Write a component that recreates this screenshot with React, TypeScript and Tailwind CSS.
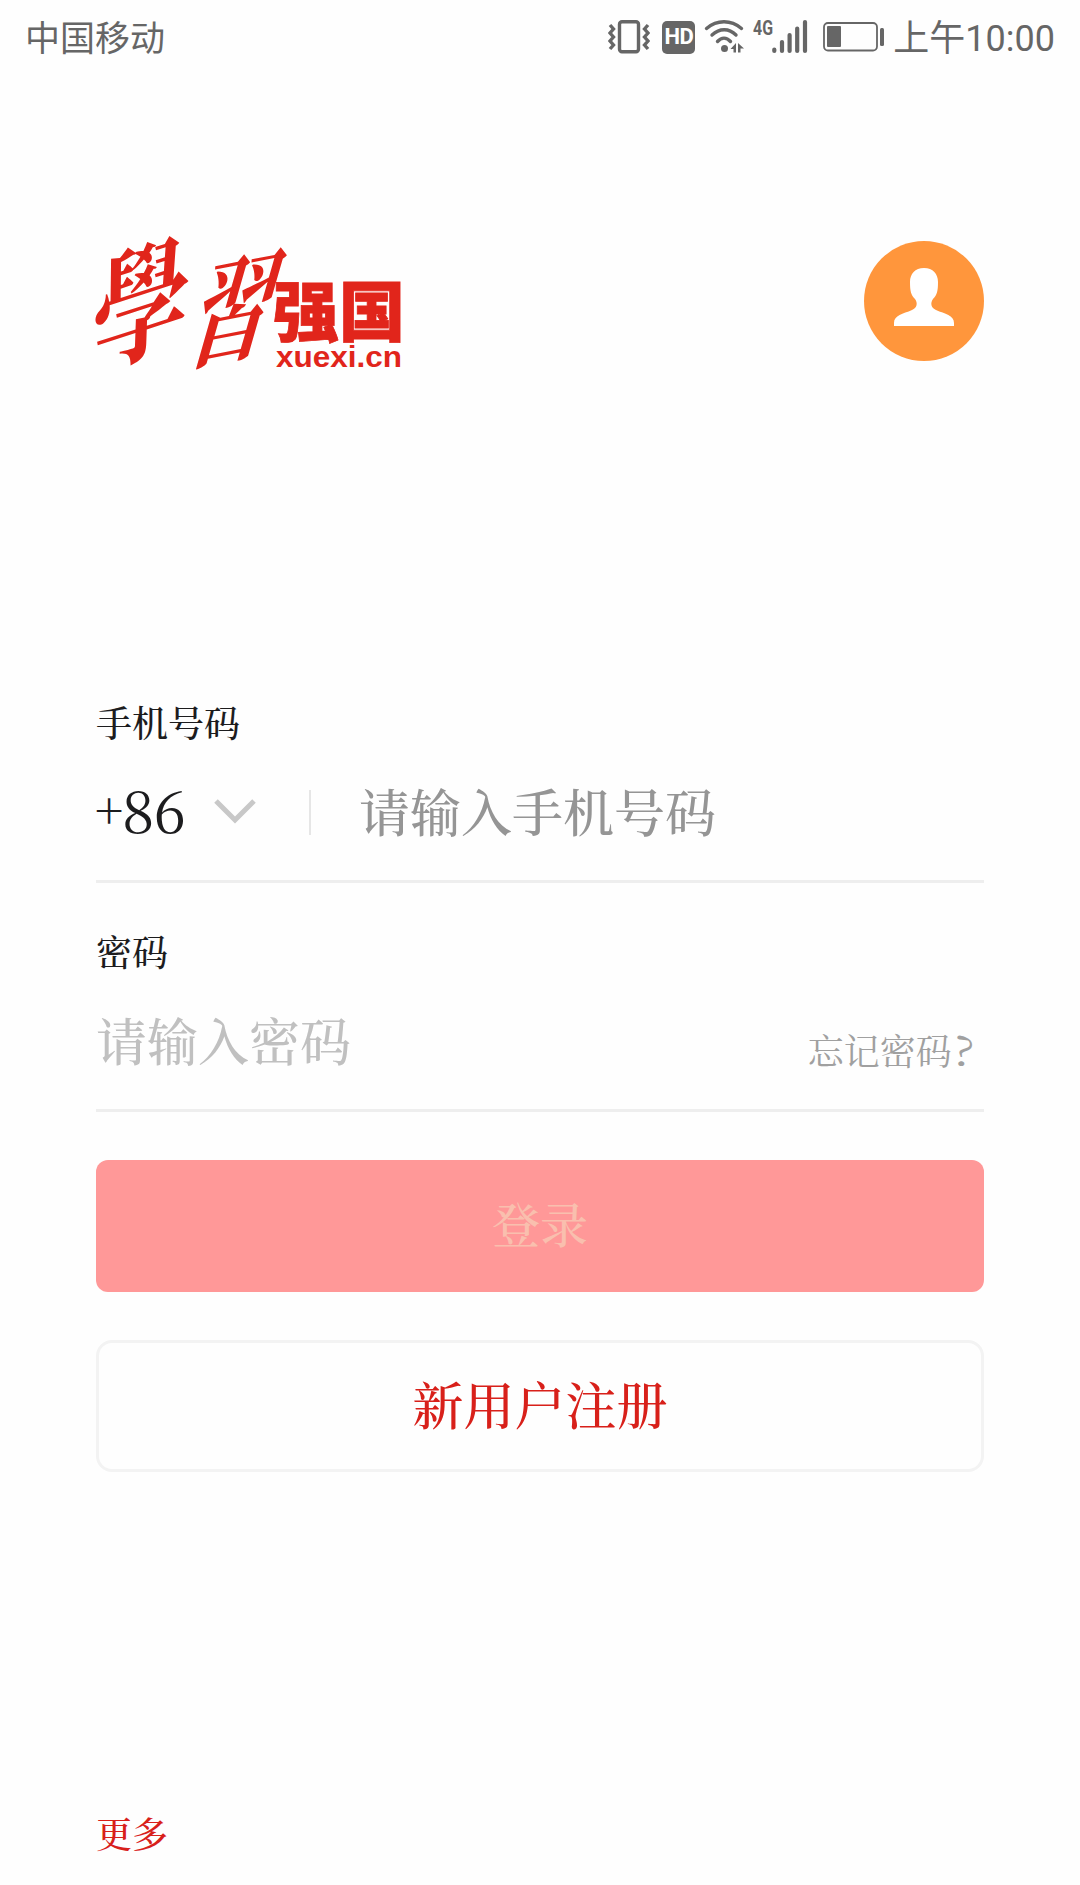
import { useState } from "react";

function VibrateIcon() {
    return (
        <svg width="42" height="34" viewBox="0 0 42 34" fill="none" stroke="#666" aria-hidden>
            <rect x="11.5" y="1.8" width="19" height="30" rx="2.5" strokeWidth="3.4" />
            <path d="M2 5l3.500 4-3.500 4 3.500 4-3.500 4 3.500 4-3.500 4" strokeWidth="3.4" />
            <path d="M40 5l-3.500 4 3.500 4-3.500 4 3.500 4-3.500 4 3.500 4" strokeWidth="3.4" />
        </svg>
    );
}

function WifiIcon() {
    return (
        <svg width="41" height="34" viewBox="0 0 41 34" aria-hidden>
            <g fill="none" stroke="#666" strokeWidth="3.4" strokeLinecap="round">
                <path d="M2.500 8.500C13 -.5 27 -.5 37.500 8.500" />
                <path d="M8 15C15.500 8 25 8 32 15" />
                <path d="M13.500 21.500C17.500 17 22.500 17 26.500 21.500" />
            </g>
            <circle cx="20.500" cy="28.500" r="3.500" fill="#666" />
            <path d="M26.500 29l5.500-6v9.500h-2.500V29zM34 23l6 5.500h-3.500v4H34z" fill="#666" />
        </svg>
    );
}

function SignalIcon() {
    return (
        <svg width="54" height="36" viewBox="0 0 54 36" className="overflow-visible" aria-hidden>
            <text
                x="-1"
                y="16"
                fill="#666"
                fontSize="21"
                fontWeight="700"
                textLength="20"
                lengthAdjust="spacingAndGlyphs"
                className="font-[Roboto,sans-serif]"
            >
                4G
            </text>
            <g stroke="#666" strokeWidth="4.2" strokeLinecap="round">
                <path d="M20.300 30.500v1.500M28 23v9M35.600 16v16M43.200 9.500V32M51 3v29" />
            </g>
        </svg>
    );
}

function BatteryIcon() {
    return (
        <svg width="62" height="30" viewBox="0 0 62 30" aria-hidden>
            <rect x="1" y="1" width="53" height="27.500" rx="4" fill="none" stroke="#666" strokeWidth="1.800" />
            <rect x="4" y="4" width="14" height="21" rx="1" fill="#666" />
            <rect x="57" y="6" width="4" height="18" rx="1.500" fill="#666" />
        </svg>
    );
}

function StatusBar() {
    return (
        <div className="flex h-[74px] items-center justify-between pr-[25px] pl-[25px] text-[35px] leading-none font-normal text-[#666] font-[Roboto,'Noto_Sans_CJK_SC',sans-serif]">
            <span className="pt-[4px]">中国移动</span>
            <div className="flex items-center">
                <VibrateIcon />
                <span className="ml-3 flex h-[33px] w-[33px] items-center justify-center rounded-[5px] bg-[#666] text-[22px] font-bold tracking-tight text-white">
                    HD
                </span>
                <span className="ml-[9px]">
                    <WifiIcon />
                </span>
                <span className="ml-[9px]">
                    <SignalIcon />
                </span>
                <span className="ml-[15px]">
                    <BatteryIcon />
                </span>
                <span className="ml-[8px] pt-[3px] text-[36px] whitespace-nowrap">上午10:00</span>
            </div>
        </div>
    );
}

function Logo() {
    return (
        <svg
            width="308"
            height="140"
            viewBox="0 0 308 140"
            fill="#e1251b"
            role="img"
            className="overflow-visible font-['Noto_Serif_CJK_SC','Noto_Sans_CJK_SC',sans-serif]"
        >
            <text transform="translate(-5 136) rotate(-18) skewX(-20) scale(1.1 1.28)" fontSize="94" fontWeight="700">
                學
            </text>
            <text transform="translate(87 131) rotate(-11) skewX(-27) scale(.86 1.14)" fontSize="98" fontWeight="700">
                習
            </text>
            <text
                x="177"
                y="105"
                fontSize="66"
                fontWeight="900"
                textLength="132"
                stroke="#e1251b"
                strokeWidth=".8"
                className="font-['Noto_Sans_CJK_SC',sans-serif]"
            >
                强国
            </text>
            <text
                x="180"
                y="136"
                fontSize="30"
                fontWeight="700"
                textLength="126"
                lengthAdjust="spacingAndGlyphs"
                className="font-['Liberation_Sans',sans-serif]"
            >
                xuexi.cn
            </text>
        </svg>
    );
}

function Avatar() {
    return (
        <svg width="120" height="120" viewBox="0 0 120 120" aria-hidden>
            <circle cx="60" cy="60" r="60" fill="#ff963c" />
            <path
                d="M60 27c-9 0-14 6-14 14 0 9 1 13 5 17 3 4 2 9-3 11-9 4-18 5-18 13v3h60v-3c0-8-9-9-18-13-5-2-6-7-3-11 4-4 5-8 5-17 0-8-5-14-14-14z"
                fill="#fff"
            />
        </svg>
    );
}

export default function App() {
    const [phone, setPhone] = useState("");
    const [password, setPassword] = useState("");

    return (
        <div className="flex h-[1885px] w-[1080px] flex-col overflow-hidden bg-[#fefefe] font-['Noto_Serif_CJK_SC','Noto_Sans_CJK_SC',serif] font-medium">
            <StatusBar />

            <div className="flex flex-1 flex-col px-24">
                {/* Logo and account */}
                <header className="mt-[157px] flex h-[140px] items-center justify-between">
                    <Logo />
                    <Avatar />
                </header>

                {/* Phone number */}
                <label className="mt-[329px] h-[44px] text-[36px] leading-[44px] text-[#1c1c1e]">手机号码</label>
                <div className="flex h-[139px] items-center border-b-[3px] border-[#eee]">
                    <span className="flex w-[88px] items-center pb-[9px] text-[58px] leading-none text-[#1c1c1e]">
                        <span className="-ml-[1px] text-[48px]">+</span>
                        <span className="-ml-[1px] font-normal">86</span>
                    </span>
                    <svg width="42" height="26" viewBox="0 0 42 26" fill="none" className="ml-[30px]" aria-hidden>
                        <path d="M2 2l19 19L40 2" stroke="#c8c8c8" strokeWidth="5" />
                    </svg>
                    <span className="ml-[53px] h-[45px] w-[2px] bg-[#e6e6e6]" />
                    <input
                        className="ml-[48px] h-[74px] min-w-0 flex-1 pb-[4px] text-[51px] outline-none placeholder:text-[#959595]"
                        placeholder="请输入手机号码"
                        value={phone}
                        onChange={(e) => setPhone(e.target.value)}
                    />
                </div>

                {/* Password */}
                <label className="mt-[46px] h-[44px] text-[36px] leading-[44px] text-[#1c1c1e]">密码</label>
                <div className="flex h-[139px] items-center border-b-[3px] border-[#eee]">
                    <input
                        className="h-[74px] min-w-0 flex-1 pb-[4px] text-[51px] outline-none placeholder:text-[#c0c0c0]"
                        placeholder="请输入密码"
                        type="password"
                        value={password}
                        onChange={(e) => setPassword(e.target.value)}
                    />
                    <a href="#" className="mt-[13px] mr-[10px] text-[36px] leading-none font-normal text-[#a0a0a0]">
                        忘记密码<span className="inline-block origin-left scale-x-125 pr-[4px] pl-[1px] text-[40px]">?</span>
                    </a>
                </div>

                <button className="mt-[48px] h-[132px] rounded-[12px] bg-[#ff9898] pb-[7px] text-[48px] leading-none text-[#f9bfae]">
                    登录
                </button>
                <button className="mt-[48px] h-[132px] rounded-[16px] border-[3px] border-[#f3f3f3] pb-[6px] text-[51px] leading-none text-[#d8201a]">
                    新用户注册
                </button>

                <a href="#" className="mt-auto mb-[30px] text-[36px] leading-[44px] text-[#d8201a]">
                    更多
                </a>
            </div>
        </div>
    );
}
